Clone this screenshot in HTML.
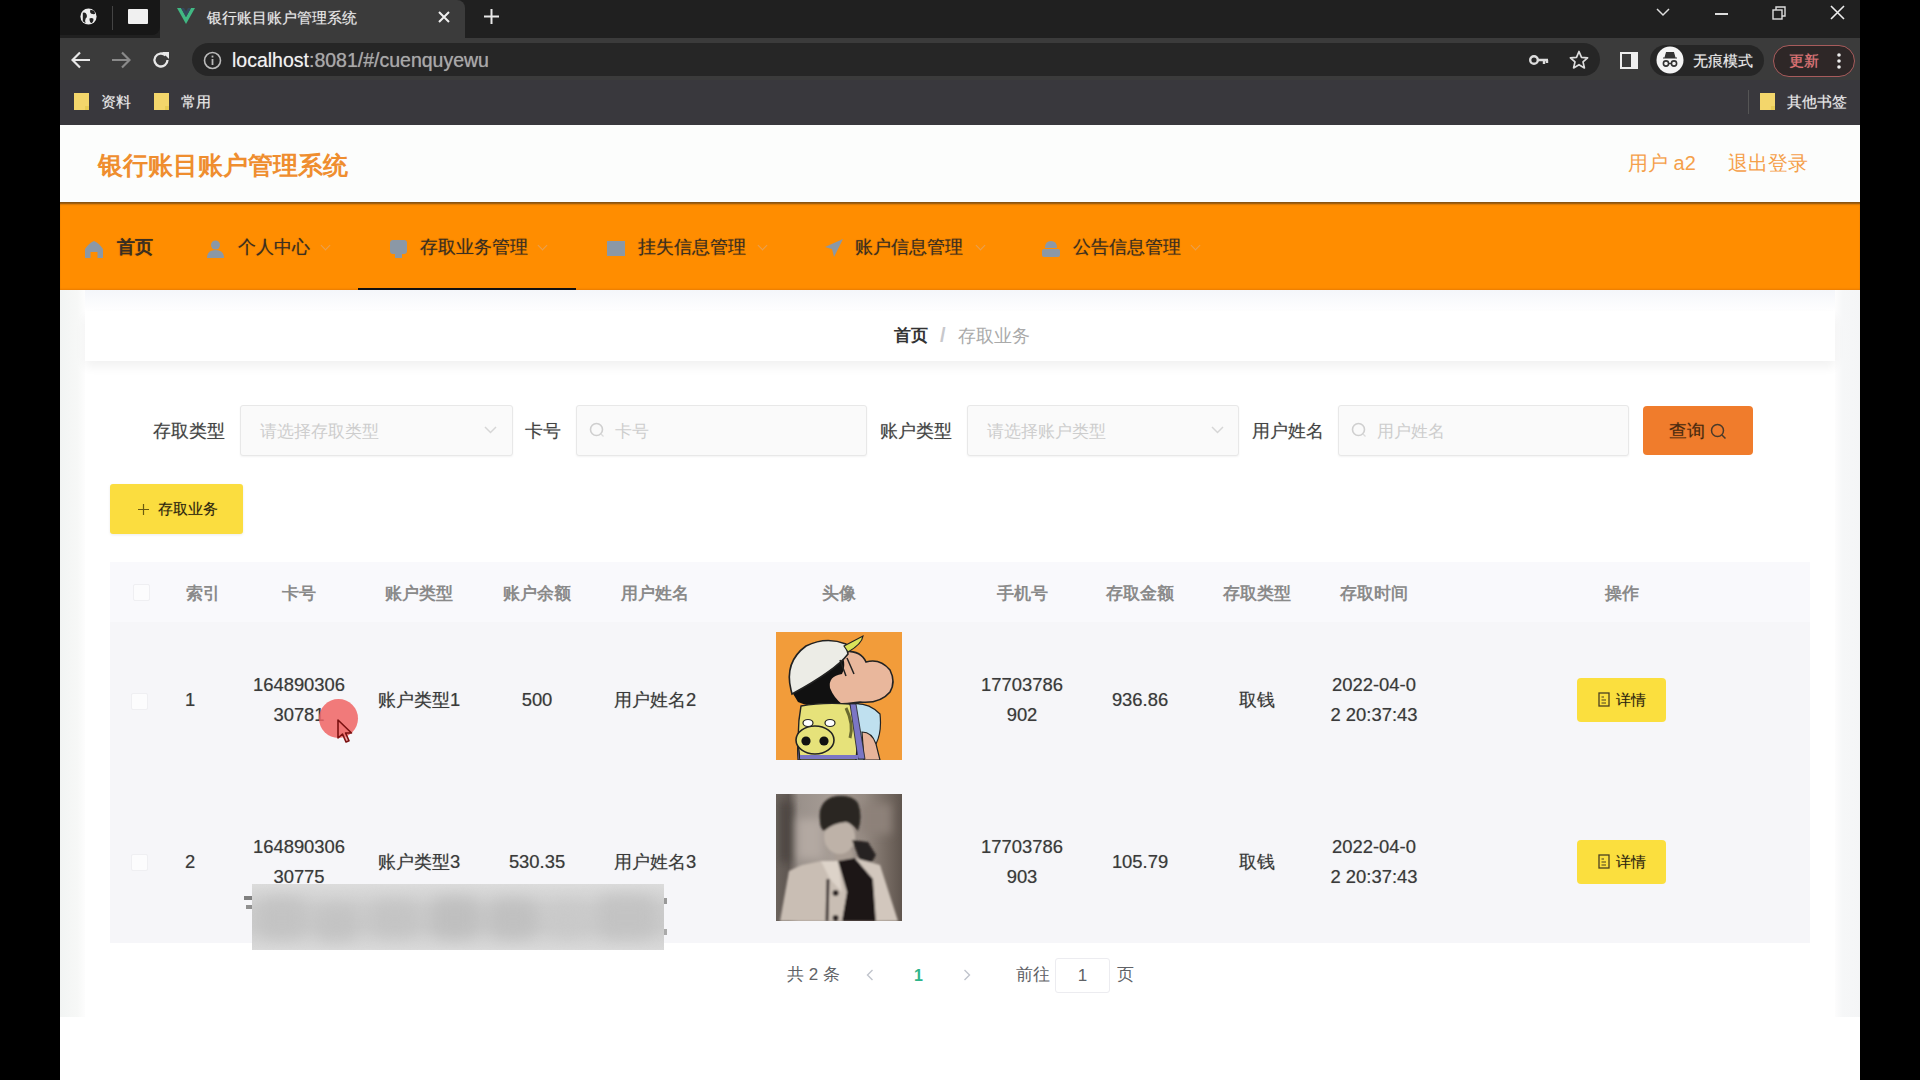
<!DOCTYPE html>
<html><head><meta charset="utf-8">
<style>
*{margin:0;padding:0;box-sizing:border-box}
html,body{width:1920px;height:1080px;overflow:hidden;background:#000;font-family:"Liberation Sans",sans-serif}
.a{position:absolute}
#win{position:absolute;left:60px;top:0;width:1800px;height:1080px;background:#fff;overflow:hidden}
/* chrome */
#tabs{left:0;top:0;width:1800px;height:38px;background:#202020}
#grp{left:0;top:0;width:100px;height:35px;background:#171717;border-radius:0 0 8px 0}
#tab{left:100px;top:0;width:305px;height:38px;background:#3b3b3b;border-radius:0 8px 0 0}
#tool{left:0;top:38px;width:1800px;height:42px;background:#3b3b3b}
#omni{left:132px;top:5px;width:1408px;height:33px;background:#262626;border-radius:17px}
#bm{left:0;top:80px;width:1800px;height:45px;background:#39383d}
.wt{position:absolute;color:#e8e8e8;font-size:14px;white-space:nowrap;line-height:1;text-shadow:0 0 .8px rgba(255,255,255,.45)}
/* page */
#page{left:0;top:125px;width:1800px;height:955px;background:#fff}
#hdr{left:0;top:0;width:1800px;height:77px;background:#fcfdfc}
#title{left:38px;top:25px;font-size:25px;font-weight:bold;color:#ef8e2f;white-space:nowrap;line-height:30px;letter-spacing:0}
.hl{position:absolute;top:26px;font-size:20px;color:#f5a04a;white-space:nowrap;line-height:24px}
#nav{left:0;top:77px;width:1800px;height:88px;background:#ff8d00;box-shadow:inset 0 3px 2px -1px rgba(110,70,20,.85), inset 0 -2px 2px -1px rgba(200,100,0,.4)}
.ni{position:absolute;top:1px;height:88px;line-height:88px;font-size:17.5px;color:#3a2f22;white-space:nowrap;text-shadow:0 0 1px rgba(60,35,0,.55)}
.ni svg{position:absolute;top:36px}
.ni .arr{position:absolute;top:39px;width:7px;height:7px;border-right:1.5px solid #e9a050;border-bottom:1.5px solid #e9a050;transform:rotate(45deg)}
#ul{left:298px;top:163px;width:218px;height:3px;background:#111}
/* content */
#crumb{left:25px;top:186px;width:1750px;height:50px;background:#fff;box-shadow:0 6px 10px rgba(0,0,0,.055)}
.lab{position:absolute;font-size:17.5px;color:#444;text-shadow:0 0 .8px rgba(0,0,0,.3);white-space:nowrap;line-height:20px;margin-top:1px}
.inp{position:absolute;height:51px;background:#fafafa;border:1px solid #e8e8e8;border-radius:3px;box-shadow:0 1px 2px rgba(0,0,0,.05)}
.ph{position:absolute;top:15px;font-size:17.2px;color:#cdcdcd;white-space:nowrap;line-height:20px}
.btn{position:absolute;border-radius:4px;font-size:15px;color:#2a2410;white-space:nowrap;text-align:center;text-shadow:0 0 1px rgba(60,50,0,.35)}
.th{position:absolute;top:2px;height:60px;line-height:60px;font-size:17px;color:#8a8a8a;white-space:nowrap;text-align:center;font-weight:bold}
.td{position:absolute;font-size:18.4px;color:#3a3a3a;text-shadow:0 0 .8px rgba(0,0,0,.35);white-space:nowrap;text-align:center;line-height:30px}
.cb{position:absolute;width:17px;height:17px;border:1px solid #efeff2;background:#fcfcfd;border-radius:2px}
</style></head><body>
<div id="win">
  <!-- tab strip -->
  <div id="tabs" class="a">
    <div id="grp" class="a"></div>
    <!-- globe -->
    <svg class="a" style="left:19px;top:7px" width="19" height="19" viewBox="0 0 20 20"><circle cx="10" cy="10" r="8.5" fill="#eee"/><path d="M4 6 Q7 5 8 8 Q9 11 7 12 Q6 14 7 17 L4 15 Z M12 3 Q11 6 13 7 Q16 8 17 7 L16 4 Z M11 12 Q13 11 15 12 Q16 15 13 17 Q11 16 11 12Z" fill="#222"/></svg>
    <div class="a" style="left:52px;top:6px;width:1px;height:24px;background:#444"></div>
    <div class="a" style="left:68px;top:9px;width:20px;height:15px;background:#f0f0f0;border-radius:1px"></div>
    <div id="tab" class="a"></div>
    <svg class="a" style="left:116px;top:7px" width="20" height="18" viewBox="0 0 20 18"><path d="M1 1 L10 17 L19 1 L15 1 L10 10 L5 1 Z" fill="#41b883"/><path d="M5 1 L10 10 L15 1 L12 1 L10 4.5 L8 1 Z" fill="#35495e"/></svg>
    <div class="wt" style="left:147px;top:10px;font-size:15px;color:#e6e6e6">银行账目账户管理系统</div>
    <svg class="a" style="left:378px;top:11px" width="12" height="12" viewBox="0 0 12 12"><path d="M1 1 L11 11 M11 1 L1 11" stroke="#f0f0f0" stroke-width="2"/></svg>
    <svg class="a" style="left:423px;top:8px" width="17" height="17" viewBox="0 0 17 17"><path d="M8.5 1 V16 M1 8.5 H16" stroke="#e8e8e8" stroke-width="2"/></svg>
    <!-- window controls -->
    <svg class="a" style="left:1596px;top:7px" width="14" height="10" viewBox="0 0 14 10"><path d="M1 2 L7 8 L13 2" stroke="#ddd" stroke-width="1.5" fill="none"/></svg>
    <div class="a" style="left:1655px;top:13px;width:13px;height:1.5px;background:#ddd"></div>
    <svg class="a" style="left:1712px;top:6px" width="14" height="14" viewBox="0 0 14 14"><rect x="1" y="4" width="9" height="9" stroke="#ddd" stroke-width="1.4" fill="none"/><path d="M4 4 V1 H13 V10 H10" stroke="#ddd" stroke-width="1.4" fill="none"/></svg>
    <svg class="a" style="left:1770px;top:5px" width="15" height="15" viewBox="0 0 15 15"><path d="M1 1 L14 14 M14 1 L1 14" stroke="#eee" stroke-width="1.6"/></svg>
  </div>
  <!-- toolbar -->
  <div id="tool" class="a">
    <svg class="a" style="left:11px;top:13px" width="20" height="18" viewBox="0 0 20 18"><path d="M19 9 H2 M9 1.5 L1.5 9 L9 16.5" stroke="#e8e8e8" stroke-width="2.2" fill="none"/></svg>
    <svg class="a" style="left:51px;top:13px" width="20" height="18" viewBox="0 0 20 18"><path d="M1 9 H18 M11 1.5 L18.5 9 L11 16.5" stroke="#8a8a8a" stroke-width="2.2" fill="none"/></svg>
    <svg class="a" style="left:91px;top:12px" width="20" height="20" viewBox="0 0 20 20"><path d="M16.5 10 A6.5 6.5 0 1 1 14.6 5.4" stroke="#e8e8e8" stroke-width="2.3" fill="none"/><path d="M11 2 H18 V9 Z" fill="#e8e8e8"/></svg>
    <div id="omni" class="a"></div>
    <svg class="a" style="left:143px;top:13px" width="19" height="19" viewBox="0 0 19 19"><circle cx="9.5" cy="9.5" r="8" stroke="#bbb" stroke-width="1.6" fill="none"/><rect x="8.6" y="8" width="1.8" height="6" fill="#bbb"/><rect x="8.6" y="4.6" width="1.8" height="1.9" fill="#bbb"/></svg>
    <div class="wt" style="left:172px;top:12px;font-size:19.5px;color:#f2f2f2;line-height:20px">localhost<span style="color:#a8a8a8">:8081/#/cuenquyewu</span></div>
    <svg class="a" style="left:1469px;top:16px" width="20" height="12" viewBox="0 0 20 12"><circle cx="5" cy="6" r="3.8" stroke="#ddd" stroke-width="2.4" fill="none"/><path d="M9 6 H19 M15 6 V10 M18 6 V9" stroke="#ddd" stroke-width="2.4"/></svg>
    <svg class="a" style="left:1509px;top:12px" width="20" height="20" viewBox="0 0 20 20"><path d="M10 1.5 L12.5 7.3 L18.6 7.8 L14 11.9 L15.4 17.9 L10 14.7 L4.6 17.9 L6 11.9 L1.4 7.8 L7.5 7.3 Z" stroke="#ddd" stroke-width="1.7" fill="none" stroke-linejoin="round"/></svg>
    <svg class="a" style="left:1560px;top:14px" width="18" height="17" viewBox="0 0 18 17"><rect x="1" y="1" width="16" height="15" stroke="#eee" stroke-width="2" fill="none"/><rect x="11" y="1" width="6" height="15" fill="#eee"/></svg>
    <div class="a" style="left:1590px;top:7px;width:114px;height:31px;border-radius:16px;background:#262626"></div>
    <svg class="a" style="left:1596px;top:8px" width="28" height="28" viewBox="0 0 28 28"><circle cx="14" cy="14" r="13.5" fill="#f4f4f4"/><path d="M7 12 H21 M9 12 L10.5 6.5 H17.5 L19 12 Z" fill="#333" stroke="#333" stroke-width="1.2"/><circle cx="10" cy="17.5" r="2.6" stroke="#333" stroke-width="1.6" fill="none"/><circle cx="18" cy="17.5" r="2.6" stroke="#333" stroke-width="1.6" fill="none"/><path d="M12.6 17.5 H15.4" stroke="#333" stroke-width="1.4"/></svg>
    <div class="wt" style="left:1633px;top:15px;font-size:15px;color:#eaeaea">无痕模式</div>
    <div class="a" style="left:1713px;top:7px;width:82px;height:32px;border-radius:16px;border:1.5px solid #a85c5c;background:#2e2727"></div>
    <div class="wt" style="left:1729px;top:15px;font-size:15px;color:#e86a6a">更新</div>
    <svg class="a" style="left:1776px;top:14px" width="6" height="18" viewBox="0 0 6 18"><circle cx="3" cy="3" r="1.8" fill="#eee"/><circle cx="3" cy="9" r="1.8" fill="#eee"/><circle cx="3" cy="15" r="1.8" fill="#eee"/></svg>
  </div>
  <!-- bookmarks -->
  <div id="bm" class="a">
    <svg class="a" style="left:14px;top:13px" width="15" height="17" viewBox="0 0 15 17"><path d="M0 0 H15 V17 H0 Z" fill="#f3d66b"/><path d="M11 13 H15 V17 H11Z" fill="#e8cc55"/></svg>
    <div class="wt" style="left:41px;top:14px;font-size:15px">资料</div>
    <svg class="a" style="left:94px;top:13px" width="15" height="17" viewBox="0 0 15 17"><path d="M0 0 H15 V17 H0 Z" fill="#f3d66b"/><path d="M11 13 H15 V17 H11Z" fill="#e8cc55"/></svg>
    <div class="wt" style="left:121px;top:14px;font-size:15px">常用</div>
    <div class="a" style="left:1688px;top:10px;width:1px;height:24px;background:#555"></div>
    <svg class="a" style="left:1700px;top:13px" width="15" height="17" viewBox="0 0 15 17"><path d="M0 0 H15 V17 H0 Z" fill="#f3d66b"/><path d="M11 13 H15 V17 H11Z" fill="#e8cc55"/></svg>
    <div class="wt" style="left:1727px;top:14px;font-size:15px">其他书签</div>
  </div>

  <!-- page -->
  <div id="page" class="a">
    <div id="hdr" class="a"></div>
    <div id="title" class="a">银行账目账户管理系统</div>
    <div class="hl" style="left:1568px">用户 a2</div>
    <div class="hl" style="left:1668px">退出登录</div>
    <div id="nav" class="a">
      <div class="ni" style="left:25px">
        <svg style="left:0;top:38px" width="18" height="17" viewBox="0 0 18 17"><path d="M9 0 Q14 2 18 8 V17 H12.5 V11 H5.5 V17 H0 V8 Q4 2 9 0 Z" fill="#8b98a6"/></svg>
        <span style="position:absolute;left:32px;font-weight:bold">首页</span>
      </div>
      <div class="ni" style="left:147px">
        <svg style="left:0;top:37px" width="17" height="18" viewBox="0 0 17 18"><circle cx="8.5" cy="5" r="4.5" fill="#8b98a6"/><path d="M0 18 Q0 10 8.5 10 Q17 10 17 18 Z" fill="#8b98a6"/></svg>
        <span style="position:absolute;left:31px">个人中心</span><i class="arr" style="left:115px"></i>
      </div>
      <div class="ni" style="left:330px">
        <svg style="left:0;top:37px" width="17" height="18" viewBox="0 0 17 18"><rect x="0" y="0" width="17" height="14" rx="3" fill="#8b98a6"/><rect x="5" y="13" width="7" height="5" fill="#8b98a6"/></svg>
        <span style="position:absolute;left:30px">存取业务管理</span><i class="arr" style="left:149px"></i>
      </div>
      <div class="ni" style="left:547px">
        <svg style="left:0;top:38px" width="18" height="15" viewBox="0 0 18 15"><path d="M0 0 H18 V15 H0 Z M3 7 H15" fill="#8b98a6"/></svg>
        <span style="position:absolute;left:31px">挂失信息管理</span><i class="arr" style="left:152px"></i>
      </div>
      <div class="ni" style="left:765px">
        <svg style="left:0;top:36px" width="18" height="18" viewBox="0 0 18 18"><path d="M18 0 L0 8 L7 10 L9 18 Z" fill="#8b98a6"/></svg>
        <span style="position:absolute;left:30px">账户信息管理</span><i class="arr" style="left:152px"></i>
      </div>
      <div class="ni" style="left:982px">
        <svg style="left:0;top:37px" width="18" height="17" viewBox="0 0 18 17"><path d="M3 8 Q3 1 9 1 Q15 1 15 8 Z" fill="#8b98a6"/><rect x="0" y="9" width="18" height="8" rx="2" fill="#8b98a6"/></svg>
        <span style="position:absolute;left:31px">公告信息管理</span><i class="arr" style="left:150px"></i>
      </div>
    </div>
    <div id="ul" class="a"></div>
    <div class="a" style="left:0;top:165px;width:1800px;height:22px;background:linear-gradient(#f4f6fa,#fff)"></div>

    <div class="a" style="left:0;top:165px;width:25px;height:727px;background:linear-gradient(90deg,#f2f4f3,#f7f8f7 70%,#fdfdfd)"></div>
    <div class="a" style="left:1775px;top:165px;width:25px;height:727px;background:linear-gradient(90deg,#fdfdfd,#f6f7f8 30%,#f4f5f6)"></div>
    <!-- breadcrumb -->
    <div id="crumb" class="a"></div>
    <div class="a" style="left:834px;top:201px;font-size:17px;line-height:20px;white-space:nowrap;color:#333;font-weight:bold">首页</div>
    <div class="a" style="left:880px;top:199px;font-size:20px;line-height:22px;color:#c8c8cc;font-weight:bold">/</div>
    <div class="a" style="left:898px;top:201px;font-size:17.5px;line-height:20px;white-space:nowrap;color:#aaa">存取业务</div>

    <!-- search form -->
    <div class="lab" style="left:93px;top:295px">存取类型</div>
    <div class="inp" style="left:180px;top:280px;width:273px">
      <div class="ph" style="left:19px">请选择存取类型</div>
      <svg class="a" style="left:243px;top:20px" width="13" height="8" viewBox="0 0 13 8"><path d="M1 1 L6.5 6.5 L12 1" stroke="#d6d6d6" stroke-width="1.5" fill="none"/></svg>
    </div>
    <div class="lab" style="left:465px;top:295px">卡号</div>
    <div class="inp" style="left:516px;top:280px;width:291px">
      <svg class="a" style="left:12px;top:16px" width="17" height="17" viewBox="0 0 17 17"><circle cx="7.5" cy="7.5" r="6" stroke="#cfcfcf" stroke-width="1.6" fill="none"/><path d="M12 12 L14.5 14.5" stroke="#dcdcdc" stroke-width="1.2"/></svg>
      <div class="ph" style="left:38px">卡号</div>
    </div>
    <div class="lab" style="left:820px;top:295px">账户类型</div>
    <div class="inp" style="left:907px;top:280px;width:272px">
      <div class="ph" style="left:19px">请选择账户类型</div>
      <svg class="a" style="left:243px;top:20px" width="13" height="8" viewBox="0 0 13 8"><path d="M1 1 L6.5 6.5 L12 1" stroke="#d6d6d6" stroke-width="1.5" fill="none"/></svg>
    </div>
    <div class="lab" style="left:1192px;top:295px">用户姓名</div>
    <div class="inp" style="left:1278px;top:280px;width:291px">
      <svg class="a" style="left:12px;top:16px" width="17" height="17" viewBox="0 0 17 17"><circle cx="7.5" cy="7.5" r="6" stroke="#cfcfcf" stroke-width="1.6" fill="none"/><path d="M12 12 L14.5 14.5" stroke="#dcdcdc" stroke-width="1.2"/></svg>
      <div class="ph" style="left:38px">用户姓名</div>
    </div>
    <div class="btn" style="left:1583px;top:281px;width:110px;height:49px;background:#f07c2c;line-height:51px;font-size:17.5px;color:#4a2a10;text-shadow:0 0 1px rgba(80,40,0,.4)">查询 <svg style="vertical-align:-3px" width="17" height="17" viewBox="0 0 17 17"><circle cx="7.5" cy="7.5" r="6" stroke="#4a3a2a" stroke-width="1.5" fill="none"/><path d="M12 12 L15.5 15.5" stroke="#4a3a2a" stroke-width="1.5"/></svg></div>

    <div class="btn" style="left:50px;top:359px;width:133px;height:50px;background:#fbdd3f;line-height:50px;font-size:15px;color:#2a2410;box-shadow:0 1px 3px rgba(0,0,0,.08);border-radius:3px;padding-left:3px"><svg style="vertical-align:-1px;margin-right:9px" width="11" height="11" viewBox="0 0 11 11"><path d="M5.5 0 V11 M0 5.5 H11" stroke="#6a5a10" stroke-width="1.2"/></svg>存取业务</div>

    <!-- table -->
    <div class="a" style="left:50px;top:437px;width:1700px;height:381px;background:#f6f6f9">
      <div class="a" style="left:0;top:0;width:1700px;height:60px;background:#f9f9fc"></div>
      <div class="cb" style="left:23px;top:22px"></div>
      <div class="th" style="left:60px;width:65px">索引</div>
      <div class="th" style="left:130px;width:118px">卡号</div>
      <div class="th" style="left:250px;width:118px">账户类型</div>
      <div class="th" style="left:368px;width:118px">账户余额</div>
      <div class="th" style="left:486px;width:118px">用户姓名</div>
      <div class="th" style="left:610px;width:238px">头像</div>
      <div class="th" style="left:853px;width:118px">手机号</div>
      <div class="th" style="left:971px;width:118px">存取金额</div>
      <div class="th" style="left:1088px;width:118px">存取类型</div>
      <div class="th" style="left:1205px;width:118px">存取时间</div>
      <div class="th" style="left:1450px;width:123px">操作</div>

      <!-- row1 -->
      <div class="cb" style="left:21px;top:131px"></div>
      <div class="td" style="left:60px;width:40px;top:123px">1</div>
      <div class="td" style="left:130px;width:118px;top:108px">164890306<br>30781</div>
      <div class="td" style="left:250px;width:118px;top:123px">账户类型1</div>
      <div class="td" style="left:368px;width:118px;top:123px">500</div>
      <div class="td" style="left:486px;width:118px;top:123px">用户姓名2</div>
      <div class="a" style="left:666px;top:70px;width:126px;height:128px;background:#f29a38;overflow:hidden" id="av1"><svg width="126" height="128" viewBox="0 0 126 128"><rect width="126" height="128" fill="#f29c3a"/>
<path d="M28 76 Q20 100 22 128 H100 Q98 95 92 80 Q80 66 60 66 Z" fill="#7b76c4" stroke="#222" stroke-width="1.2"/>
<path d="M76 72 Q92 70 104 82 Q106 100 100 112 L88 110 L90 128 H74 Q70 100 76 72Z" fill="#bfe0ef" stroke="#222" stroke-width="1.2"/>
<path d="M86 100 Q96 100 100 112 L104 128 H88 Z" fill="#e8b49a" stroke="#222" stroke-width="1.2"/>
<path d="M60 20 Q84 16 90 30 Q104 26 114 38 Q120 50 114 60 Q104 72 84 70 Q70 72 62 72 Q50 70 48 58 Q44 46 52 40 Q54 28 60 20Z" fill="#e9b79c" stroke="#222" stroke-width="1.6"/>
<path d="M16 60 Q14 40 34 28 L62 16 Q72 30 66 42 Q52 44 54 56 Q58 66 66 72 Q40 78 22 70 Z" fill="#111"/>
<path d="M15 58 Q8 30 30 14 Q50 4 70 12 L72 22 Q60 38 16 62 Z" fill="#ecece6" stroke="#222" stroke-width="1.6"/>
<path d="M68 14 L87 4 Q86 12 72 20 Z" fill="#d9e35a" stroke="#222" stroke-width="1.2"/>
<path d="M64 28 L70 44 M71 26 L78 42" stroke="#222" stroke-width="1.5"/>
<path d="M25 74 Q46 70 74 72 Q84 96 80 128 H24 Q20 100 25 74Z" fill="#e6e27a" stroke="#222" stroke-width="1.4"/>
<ellipse cx="39" cy="108" rx="19" ry="14" fill="#e6e27a" stroke="#222" stroke-width="1.6"/>
<circle cx="30" cy="109" r="4.6" fill="#111"/><circle cx="48" cy="109" r="4.6" fill="#111"/>
<ellipse cx="32" cy="91" rx="5" ry="3.5" fill="#fff" stroke="#222" stroke-width="1.2"/><ellipse cx="54" cy="91" rx="5" ry="3.5" fill="#fff" stroke="#222" stroke-width="1.2"/>
<path d="M74 72 L80 72 L89 127 L82 127 Z" fill="#7b76c4" stroke="#222" stroke-width=".8"/><path d="M24 123 L82 123 L82 127 L24 127Z" fill="#7b76c4"/><path d="M70 76 Q78 92 74 106" stroke="#6a6a30" stroke-width="3" fill="none"/>
</svg></div>
      <div class="td" style="left:853px;width:118px;top:108px">17703786<br>902</div>
      <div class="td" style="left:971px;width:118px;top:123px">936.86</div>
      <div class="td" style="left:1088px;width:118px;top:123px">取钱</div>
      <div class="td" style="left:1205px;width:118px;top:108px">2022-04-0<br>2 20:37:43</div>
      <div class="btn" style="left:1467px;top:116px;width:89px;height:44px;background:#fbdf3e;line-height:44px;font-size:15px"><svg style="vertical-align:-2px;margin-right:6px" width="12" height="15" viewBox="0 0 12 15"><rect x="1" y="1" width="10" height="13" stroke="#4a4020" stroke-width="1.3" fill="none"/><path d="M3.5 5 H6 M3.5 8 H8 M3.5 11 H8" stroke="#4a4020" stroke-width="1.2"/></svg>详情</div>

      <!-- row2 -->
      <div class="cb" style="left:21px;top:292px"></div>
      <div class="td" style="left:60px;width:40px;top:285px">2</div>
      <div class="td" style="left:130px;width:118px;top:270px">164890306<br>30775</div>
      <div class="td" style="left:250px;width:118px;top:285px">账户类型3</div>
      <div class="td" style="left:368px;width:118px;top:285px">530.35</div>
      <div class="td" style="left:486px;width:118px;top:285px">用户姓名3</div>
      <div class="a" style="left:666px;top:232px;width:126px;height:127px;background:#6b625c;overflow:hidden" id="av2"><svg width="126" height="127" viewBox="0 0 126 127"><defs>
<linearGradient id="bg2" x1="0" y1="0" x2="1" y2="0"><stop offset="0" stop-color="#6a625c"/><stop offset=".1" stop-color="#5e5651"/><stop offset=".18" stop-color="#9a918b"/><stop offset=".45" stop-color="#a69c95"/><stop offset=".7" stop-color="#958a82"/><stop offset=".88" stop-color="#756a62"/><stop offset="1" stop-color="#5f554e"/></linearGradient>
<filter id="bl"><feGaussianBlur stdDeviation="1"/></filter><filter id="bl2"><feGaussianBlur stdDeviation="4"/></filter></defs>
<rect width="126" height="127" fill="url(#bg2)"/>
<g filter="url(#bl2)"><rect x="4" y="8" width="12" height="60" fill="#4e4743"/><rect x="22" y="25" width="25" height="40" fill="#b3a9a2"/><rect x="85" y="10" width="30" height="30" fill="#8d8179"/></g>
<g filter="url(#bl)">
<path d="M58 56 L76 56 L78 68 L60 68Z" fill="#a89c93"/>
<ellipse cx="63.6" cy="43" rx="15.5" ry="17" fill="#beb2a8"/>
<path d="M44 28 Q41 9 56 3 Q74 -1 82 9 Q87 22 82 37 Q77 30 70 28 Q57 29 48 37 Q44 34 44 28Z" fill="#2c2622"/>
<path d="M76 46 L92 48 L100 61 L96 68 L84 67Z" fill="#272120"/>
<path d="M4 127 L13 77 L26 71 L45 67 L62 67 L71 98 L66 127Z" fill="#c9beb4"/>
<path d="M45 67 L62 67 L66 98 L54 85Z" fill="#ddd3c9"/>
<path d="M62 67 L79 64 L97 85 L100 127 L66 127 L71 98Z" fill="#1c1816"/>
<path d="M79 64 L104 71 L122 127 L100 127 L97 85Z" fill="#d2c7bd"/>
<path d="M52 85 L51 127" stroke="#3a3330" stroke-width="3"/>
<circle cx="59.6" cy="99" r="3" fill="#2a2420"/><circle cx="59.6" cy="124" r="3" fill="#2a2420"/>
</g></svg></div>
      <div class="td" style="left:853px;width:118px;top:270px">17703786<br>903</div>
      <div class="td" style="left:971px;width:118px;top:285px">105.79</div>
      <div class="td" style="left:1088px;width:118px;top:285px">取钱</div>
      <div class="td" style="left:1205px;width:118px;top:270px">2022-04-0<br>2 20:37:43</div>
      <div class="btn" style="left:1467px;top:278px;width:89px;height:44px;background:#fbdf3e;line-height:44px;font-size:15px"><svg style="vertical-align:-2px;margin-right:6px" width="12" height="15" viewBox="0 0 12 15"><rect x="1" y="1" width="10" height="13" stroke="#4a4020" stroke-width="1.3" fill="none"/><path d="M3.5 5 H6 M3.5 8 H8 M3.5 11 H8" stroke="#4a4020" stroke-width="1.2"/></svg>详情</div>
    </div>
    <!-- pagination -->
    <div class="a" style="left:727px;top:840px;font-size:17px;line-height:20px;color:#606266;white-space:nowrap">共 2 条</div>
    <svg class="a" style="left:806px;top:844px" width="8" height="12" viewBox="0 0 8 12"><path d="M6.5 1 L1.5 6 L6.5 11" stroke="#c0c4cc" stroke-width="1.4" fill="none"/></svg>
    <div class="a" style="left:854px;top:841px;font-size:16px;line-height:20px;color:#2fb48a;font-weight:bold">1</div>
    <svg class="a" style="left:903px;top:844px" width="8" height="12" viewBox="0 0 8 12"><path d="M1.5 1 L6.5 6 L1.5 11" stroke="#c0c4cc" stroke-width="1.4" fill="none"/></svg>
    <div class="a" style="left:956px;top:840px;font-size:17px;line-height:20px;color:#606266;white-space:nowrap">前往</div>
    <div class="a" style="left:995px;top:833px;width:55px;height:35px;border:1px solid #ececf0;border-radius:3px;background:#fff;text-align:center;line-height:33px;font-size:17px;color:#606266">1</div>
    <div class="a" style="left:1057px;top:840px;font-size:17px;line-height:20px;color:#606266">页</div>

    <!-- blurred overlay -->
    <div class="a" style="left:192px;top:759px;width:412px;height:66px;background:linear-gradient(#dcdcdc,#cdcdcd 35%,#cbcbcb 65%,#dadada);overflow:hidden">
      <div class="a" style="left:0;top:0;width:412px;height:66px;filter:blur(8px)">
        <div class="a" style="left:5px;top:14px;width:50px;height:40px;background:#c3c3c3;border-radius:14px"></div>
        <div class="a" style="left:62px;top:22px;width:45px;height:34px;background:#c3c3c3;border-radius:14px"></div>
        <div class="a" style="left:118px;top:18px;width:50px;height:34px;background:#c4c4c4;border-radius:14px"></div>
        <div class="a" style="left:178px;top:14px;width:50px;height:40px;background:#bfbfbf;border-radius:14px"></div>
        <div class="a" style="left:236px;top:16px;width:50px;height:38px;background:#c0c0c0;border-radius:14px"></div>
        <div class="a" style="left:296px;top:20px;width:40px;height:32px;background:#c9c9c9;border-radius:14px"></div>
        <div class="a" style="left:345px;top:12px;width:60px;height:42px;background:#c3c3c3;border-radius:14px"></div>
      </div>
    </div>
    <div class="a" style="left:184px;top:771px;width:8px;height:4px;background:#808080"></div>
    <div class="a" style="left:186px;top:780px;width:6px;height:4px;background:#909090"></div>
    <div class="a" style="left:604px;top:773px;width:3px;height:6px;background:#999"></div>
    <div class="a" style="left:604px;top:804px;width:3px;height:6px;background:#aaa"></div>

    <!-- cursor -->
    <div class="a" style="left:259px;top:574px;width:39px;height:39px;border-radius:50%;background:rgba(240,100,100,.85)"></div>
    <svg class="a" style="left:276px;top:594px" width="18" height="26" viewBox="0 0 18 26"><path d="M2 1 L2 19 L6.5 15 L10 23 L13 21.7 L9.6 14 L15.5 14 Z" fill="rgba(240,110,110,.6)" stroke="#7a1010" stroke-width="1.6" stroke-linejoin="round"/></svg>

  </div>
</div>
</body></html>
